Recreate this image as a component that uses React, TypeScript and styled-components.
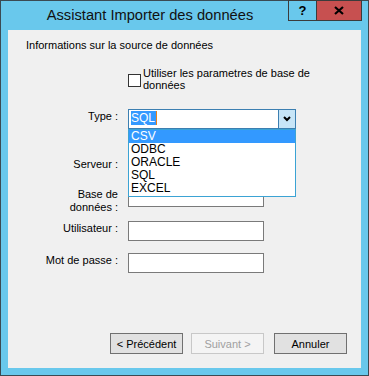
import styled, { createGlobalStyle } from "styled-components";

const GlobalStyle = createGlobalStyle`
  html, body {
    margin: 0;
    padding: 0;
    background: #69c8ec;
  }
  * {
    box-sizing: border-box;
  }
`;

const Window = styled.div`
  width: 369px;
  height: 376px;
  display: flex;
  flex-direction: column;
  background: #69c8ec;
  border: 1px solid #3b4a52;
  padding: 0 7px 7px 7px;
  font-family: "Liberation Sans", Arial, sans-serif;
  color: #000;
`;

const TitleBar = styled.div`
  height: 29px;
  display: flex;
  align-items: flex-start;
`;

const Title = styled.div`
  flex: 1;
  text-align: center;
  font-size: 14.7px;
  line-height: 28px;
  color: #111;
  padding-left: 4px;
`;

const CaptionButtons = styled.div`
  display: flex;
  margin-top: -1px;
  margin-right: -1px;
`;

const CaptionButton = styled.div<{ $close?: boolean }>`
  width: ${(p) => (p.$close ? "46px" : "29px")};
  height: 21px;
  border: 1px solid #3b3b3b;
  margin-left: ${(p) => (p.$close ? "-1px" : "0")};
  background: ${(p) => (p.$close ? "#c75050" : "transparent")};
  display: flex;
  align-items: center;
  justify-content: center;
  font-size: 13px;
  font-weight: bold;
  color: #000;
`;

const Client = styled.div`
  flex: 1;
  background: #f0f0f0;
  display: flex;
  flex-direction: column;
  font-size: 11px;
`;

const Header = styled.div`
  margin-top: 9px;
  padding-left: 18px;
  line-height: 13px;
`;

const Row = styled.div<{ $mt: number }>`
  display: grid;
  grid-template-columns: 110px 1fr;
  column-gap: 10px;
  margin-top: ${(p) => p.$mt}px;
`;

const Label = styled.div`
  text-align: right;
  line-height: 13px;
  padding-top: 1px;
`;

const CheckField = styled.div`
  display: flex;
  align-items: flex-start;
  gap: 2px;
  line-height: 12px;
`;

const CheckBox = styled.span`
  width: 13px;
  height: 13px;
  margin-top: 7px;
  border: 1px solid #333;
  background: #fff;
  flex: none;
`;

const TextBox = styled.input`
  display: block;
  width: 136px;
  height: 20px;
  margin: 0;
  border: 1px solid #7a7a7a;
  background: #fff;
  outline: none;
`;

const ComboWrap = styled.div`
  position: relative;
  width: 168px;
`;

const Combo = styled.div`
  height: 20px;
  display: flex;
  border: 1px solid #3c7fb1;
  background: #fff;
`;

const ComboText = styled.div`
  flex: 1;
  padding: 2px 0 0 2px;
  font-size: 12px;
  line-height: 13px;
`;

const Selection = styled.span`
  background: #3399ff;
  color: #fff;
  border-right: 1px solid #e8801c;
  padding-right: 1px;
`;

const ComboButton = styled.div`
  width: 17px;
  border-left: 1px solid #3c7fb1;
  background: #c7e5f7;
  display: flex;
  align-items: center;
  justify-content: center;
`;

const DropList = styled.ul`
  position: absolute;
  z-index: 2;
  left: 0;
  top: 100%;
  width: 100%;
  margin: 0;
  padding: 0 0 1px 0;
  list-style: none;
  background: #fff;
  border: 1px solid #3ba3d4;
`;

const Item = styled.li<{ $active?: boolean }>`
  height: 13px;
  line-height: 13px;
  padding-left: 2px;
  font-size: 12px;
  background: ${(p) => (p.$active ? "#3399ff" : "transparent")};
  color: ${(p) => (p.$active ? "#fff" : "#000")};
`;

const ButtonRow = styled.div`
  margin-top: auto;
  margin-bottom: 14px;
  padding-right: 14px;
  display: flex;
  justify-content: flex-end;
  gap: 8px;
`;

const Button = styled.div<{ $disabled?: boolean; $spaced?: boolean }>`
  width: 73px;
  height: 21px;
  margin-left: ${(p) => (p.$spaced ? "2px" : "0")};
  display: flex;
  align-items: center;
  justify-content: center;
  border: 1px solid ${(p) => (p.$disabled ? "#c8c8c8" : "#707070")};
  background: ${(p) => (p.$disabled ? "#f4f4f4" : "#e1e1e1")};
  color: ${(p) => (p.$disabled ? "#a0a0a0" : "#000")};
  font-size: 11px;
`;

const types = ["CSV", "ODBC", "ORACLE", "SQL", "EXCEL"];

export default function App() {
  return (
    <>
      <GlobalStyle />
      <Window>
        <TitleBar>
          <Title>Assistant Importer des données</Title>
          <CaptionButtons>
            <CaptionButton>?</CaptionButton>
            <CaptionButton $close>
              <svg width="10" height="9" viewBox="0 0 10 9">
                <path d="M1 1 L9 8 M9 1 L1 8" stroke="#000" strokeWidth="2.2" />
              </svg>
            </CaptionButton>
          </CaptionButtons>
        </TitleBar>
        <Client>
          <Header>Informations sur la source de données</Header>

          <Row $mt={15}>
            <span />
            <CheckField>
              <CheckBox />
              <span>
                Utiliser les parametres de base de
                <br />
                données
              </span>
            </CheckField>
          </Row>

          <Row $mt={18}>
            <Label>Type :</Label>
            <ComboWrap>
              <Combo>
                <ComboText>
                  <Selection>SQL</Selection>
                </ComboText>
                <ComboButton>
                  <svg width="8" height="6" viewBox="0 0 8 6">
                    <path d="M1 1 L4 4 L7 1" stroke="#000" strokeWidth="2" fill="none" />
                  </svg>
                </ComboButton>
              </Combo>
              <DropList>
                {types.map((t, i) => (
                  <Item key={t} $active={i === 0}>
                    {t}
                  </Item>
                ))}
              </DropList>
            </ComboWrap>
          </Row>

          <Row $mt={28}>
            <Label>Serveur :</Label>
            <TextBox readOnly tabIndex={-1} />
          </Row>

          <Row $mt={10}>
            <Label>
              Base de
              <br />
              données :
            </Label>
            <TextBox readOnly tabIndex={-1} />
          </Row>

          <Row $mt={7}>
            <Label>Utilisateur :</Label>
            <TextBox readOnly tabIndex={-1} />
          </Row>

          <Row $mt={12}>
            <Label>Mot de passe :</Label>
            <TextBox readOnly tabIndex={-1} />
          </Row>

          <ButtonRow>
            <Button>&lt; Précédent</Button>
            <Button $disabled>Suivant &gt;</Button>
            <Button $spaced>Annuler</Button>
          </ButtonRow>
        </Client>
      </Window>
    </>
  );
}
